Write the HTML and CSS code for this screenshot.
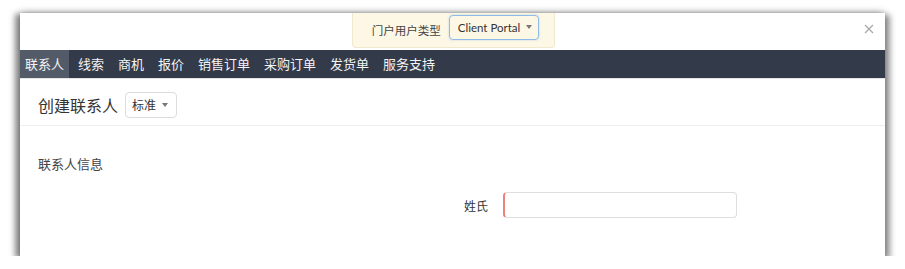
FILE: index.html
```html
<!DOCTYPE html>
<html lang="zh-CN">
<head>
    <meta charset="UTF-8">
    <title>创建联系人</title>
    <link rel="stylesheet" href="styles.css">
</head>
<body>

    <div class="panel">
        <!-- Top bar with portal type notice -->
        <div class="topbar">
            <div class="notice">
                <span class="notice-label">门户用户类型</span>
                <div class="portal-select">Client Portal <span class="caret"></span></div>
            </div>
            <button class="close-btn" aria-label="关闭">
                <svg width="10" height="10" viewBox="0 0 10 10">
                    <path d="M1 1 L9 9 M9 1 L1 9" stroke="#a8a8a8" stroke-width="1.2" fill="none"/>
                </svg>
            </button>
        </div>

        <!-- Module tabs -->
        <ul class="tabs">
            <li class="tab active">联系人</li>
            <li class="tab">线索</li>
            <li class="tab">商机</li>
            <li class="tab">报价</li>
            <li class="tab">销售订单</li>
            <li class="tab">采购订单</li>
            <li class="tab">发货单</li>
            <li class="tab">服务支持</li>
        </ul>

        <!-- Page header -->
        <div class="page-header">
            <h1>创建联系人</h1>
            <div class="layout-select">标准 <span class="caret"></span></div>
        </div>

        <!-- Form -->
        <div class="form-body">
            <h2>联系人信息</h2>
            <div class="field-row">
                <label class="field-label">姓氏</label>
                <input class="field-input required" type="text">
            </div>
        </div>
    </div>

</body>
</html>
```

FILE: styles.css
```css
/* Base Styling */
body {
    margin: 0;
    padding: 13px 20px 0 20px;
    background-color: #fff;
    font-family: 'Lato', 'Noto Sans CJK SC', sans-serif;
    color: #333;
}

.panel {
    width: 865px;
    height: 243px;
    background-color: #fff;
    box-shadow: -4px 2px 6px 1px rgba(0, 0, 0, 0.45), 4px 3px 6px 1px rgba(0, 0, 0, 0.4), 0 -2px 8px rgba(0, 0, 0, 0.12);
    overflow: hidden;
}

/* Top bar */
.topbar {
    position: relative;
    height: 37px;
    display: flex;
    justify-content: center;
    align-items: flex-start;
}

.notice {
    display: flex;
    align-items: center;
    height: 34px;
    padding: 0 15px 0 19px;
    background-color: #fdf8e5;
    border: 1px solid #f1e9cf;
    border-top: none;
    border-radius: 0 0 4px 4px;
    margin-left: 2px;
}

.notice-label {
    font-size: 11.5px;
    color: #444;
    margin-right: 8px;
}

.portal-select {
    display: flex;
    align-items: center;
    height: 23px;
    padding: 0 6px 0 8px;
    border: 1px solid #8fbbe8;
    border-radius: 4px;
    box-shadow: 0 0 2px rgba(100, 160, 230, 0.5);
    font-size: 11.5px;
    color: #333;
    margin-top: -6px;
}

.caret {
    display: inline-block;
    width: 0;
    height: 0;
    margin-left: 6px;
    border-left: 3px solid transparent;
    border-right: 3px solid transparent;
    border-top: 4px solid #777;
}

.close-btn {
    position: absolute;
    right: 11px;
    top: 9px;
    padding: 0;
    border: none;
    background: none;
    cursor: pointer;
}

/* Module tabs */
.tabs {
    display: flex;
    gap: 4px;
    margin: 0;
    padding: 0;
    list-style: none;
    height: 28px;
    background-color: #333a49;
    border-bottom: 1px solid #e4e6ea;
}

.tab {
    padding: 0 5px;
    line-height: 28px;
    font-size: 13px;
    color: #f2f4f6;
}

.tab.active {
    background-color: #545b68;
}

/* Page header */
.page-header {
    display: flex;
    align-items: center;
    box-sizing: border-box;
    height: 47px;
    padding: 5px 0 0 18px;
    border-bottom: 1px solid #eeeeee;
}

h1 {
    margin: 0 7px 0 0;
    font-size: 16px;
    font-weight: normal;
    color: #333;
}

.layout-select {
    display: flex;
    align-items: center;
    box-sizing: border-box;
    height: 26px;
    padding: 0 8px 0 6px;
    border: 1px solid #dcdcdc;
    border-radius: 4px;
    font-size: 12px;
    color: #333;
}

/* Form */
.form-body {
    padding: 29px 18px 0 18px;
}

h2 {
    margin: 0;
    font-size: 13px;
    font-weight: normal;
    line-height: 18px;
    color: #444;
}

.field-row {
    display: flex;
    align-items: center;
    margin-top: 19px;
    padding-left: 410px;
}

.field-label {
    width: 40px;
    margin-right: 15px;
    font-size: 12px;
    color: #333;
    text-align: right;
}

.field-input {
    box-sizing: border-box;
    width: 234px;
    height: 26px;
    border: 1px solid #dedede;
    border-radius: 4px;
    outline: none;
}

.field-input.required {
    border-left: 2px solid #ee8080;
}
```
